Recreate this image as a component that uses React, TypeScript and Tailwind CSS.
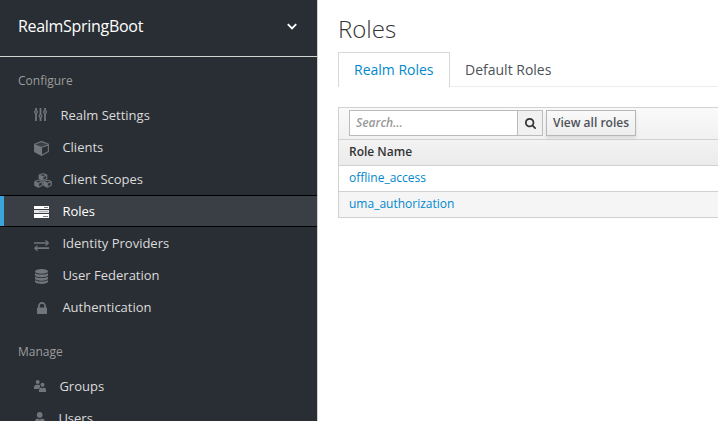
import type { ReactNode } from "react";

const CUBE =
  "M896 1629l640-349v-636l-640 233v752zm-64-865l698-254-698-254-698 254zm832-252v768q0 35-18 65t-49 47l-704 384q-28 16-61 16t-61-16l-704-384q-31-17-49-47t-18-65v-768q0-40 23-73t61-50l704-256q22-8 44-8t44 8l704 256q38 17 61 50t23 73z";

const CUBE_FACE = "M832 764l698-254-698-254-698 254z";

const sliders = (
  <svg className="mt-[9px] h-[13px] w-[13px]" viewBox="0 0 13 13" fill="none" stroke="currentColor">
    <path strokeWidth="1.8" d="M2 0v2.400M2 5.600V13M6.500 0v6.400M6.500 9.600V13M11 0v2.400M11 5.600V13" />
    <path strokeWidth="1.200" d="M.6 4a1.400 1.400 0 1 0 2.800 0a1.400 1.400 0 1 0-2.800 0M5.100 8a1.400 1.400 0 1 0 2.800 0a1.400 1.400 0 1 0-2.800 0M9.600 4a1.400 1.400 0 1 0 2.800 0a1.400 1.400 0 1 0-2.800 0" />
  </svg>
);

const cube = (
  <svg className="mt-[10px] h-[15px] w-[15px]" viewBox="0 120 1664 1680" fill="currentColor">
    <path d={CUBE} />
    <path opacity=".25" d={CUBE_FACE} />
  </svg>
);

const cubes = (
  <svg className="mt-[10px] h-[15px] w-[18px]" viewBox="0 0 18 15" fill="currentColor" stroke="currentColor">
    <path strokeWidth="110" transform="translate(4.9 -.2) scale(.0049 .0045)" d={CUBE} />
    <path strokeWidth="110" transform="translate(.4 6.400) scale(.0049 .0045)" d={CUBE} />
    <path strokeWidth="110" transform="translate(9.400 6.400) scale(.0049 .0045)" d={CUBE} />
  </svg>
);

const tasks = (
  <svg className="mt-[11px] h-[12px] w-[15px]" viewBox="0 0 15 12">
    <path fill="#fff" d="M0 0h15v3H0zM0 8h15v4H0z" />
    <path fill="#e2e2e3" d="M0 4h15v3H0z" />
    <path fill="#777a80" d="M10 1h4v1h-4zM9 10h5v1H9z" />
    <path fill="#b4b5b8" d="M5 5h9v1H5z" />
  </svg>
);

const exchange = (
  <svg className="mt-[13px] h-[11px] w-[15px]" viewBox="0 0 15 11" fill="none" stroke="currentColor">
    <path strokeWidth="1.700" d="M0 3h14M1 8.200h14" />
    <path strokeWidth="1.300" d="M11.500.4 14.200 3l-2.700 2.600M3.500 5.600.8 8.200l2.700 2.600" />
  </svg>
);

const database = (
  <svg className="mt-[10px] ml-px h-[15px] w-[13px]" viewBox="0 0 13 15" fill="currentColor">
    <ellipse cx="6.500" cy="2.400" rx="6.500" ry="2.400" />
    <path d="M0 4.100c2 2 11 2 13 0v1.800c0 3-13 3-13 0zM0 7.600c2 2 11 2 13 0v1.800c0 3-13 3-13 0zM0 11.100c2 2 11 2 13 0v1.500c0 3.200-13 3.200-13 0z" />
  </svg>
);

const lock = (
  <svg className="mt-[11px] ml-[3px] h-[12px] w-[10px]" viewBox="320 128 1152 1408" preserveAspectRatio="none" fill="currentColor">
    <path d="M640 768h512v-192q0-106-75-181t-181-75-181 75-75 181v192zm832 96v576q0 40-28 68t-68 28h-960q-40 0-68-28t-28-68v-576q0-40 28-68t68-28h32v-192q0-184 132-316t316-132 316 132 132 316v192h32q40 0 68 28t28 68z" />
  </svg>
);

const groups = (
  <svg className="mt-[10px] h-[12px] w-[12px]" viewBox="0 0 12 12" fill="currentColor">
    <circle cx="3.700" cy="2" r="2" />
    <circle cx="8.500" cy="4.800" r="2" />
    <path d="M0 9V7q0-2 2.200-2.300h2.800q.8.200 1 .9-.2 1 .2 1.600-1.400.5-1.700 1.800zM5 12v-2q0-2.200 2-2.600l1.500 1 1.500-1q2 .4 2 2.600v2z" />
  </svg>
);

const user = (
  <svg className="mt-[10px] ml-px h-[13px] w-[10px]" viewBox="0 0 10 13" fill="currentColor">
    <circle cx="4.700" cy="2.900" r="2.800" />
    <path d="M0 12V9.500q0-2.600 2.500-2.900l2.300 1 2.300-1q2.900.3 2.900 2.900V12z" />
  </svg>
);

function NavItem({ icon, label, pad, active = false }: { icon: ReactNode; label: string; pad: string; active?: boolean }) {
  if (active) {
    return (
      <li className="flex h-8 border-y border-black bg-[#393f45] text-white">
        <span className="w-1 bg-[#39a5dc]" />
        <span className="-mt-px w-[30px]" />
        <span className="-mt-px w-0">{icon}</span>
        <span className="-mt-px pl-[28.4px] leading-8">{label}</span>
      </li>
    );
  }
  return (
    <li className="flex h-8 pl-[34px] text-[#72767b]">
      <span className="w-0">{icon}</span>
      <span className={`${pad} leading-8 text-[#dbdbdb]`}>{label}</span>
    </li>
  );
}

function Sidebar() {
  return (
    <aside className="h-full w-[318px] shrink-0 overflow-hidden border-r border-[#d1d1d1] bg-[#292e34]">
      <div className="flex h-[57px] items-center justify-between border-b border-[#cfd6d1] pr-[20px] pb-[4px] pl-[18px] text-base text-white">
        <span className="tracking-[-0.3px]">RealmSpringBoot</span>
        <svg className="mt-px h-[7px] w-[10px]" viewBox="0 0 10 7" fill="none" stroke="white" strokeWidth="1.800">
          <path d="M.8 1.200 5 5.400 9.200 1.200" />
        </svg>
      </div>
      <h2 className="mt-[14px] h-7 pl-[18px] text-[12px] leading-5 text-[#9c9c9c]">Configure</h2>
      <ul className="text-[13px]">
        <NavItem icon={sliders} label="Realm Settings" pad="pl-[26.4px]" />
        <NavItem icon={cube} label="Clients" pad="pl-[28.4px]" />
        <NavItem icon={cubes} label="Client Scopes" pad="pl-[28.4px]" />
        <NavItem icon={tasks} label="Roles" pad="pl-[28.4px]" active />
        <NavItem icon={exchange} label="Identity Providers" pad="pl-[28.4px]" />
        <NavItem icon={database} label="User Federation" pad="pl-[28.4px]" />
        <NavItem icon={lock} label="Authentication" pad="pl-[28.4px]" />
      </ul>
      <h2 className="mt-[19px] h-7 pl-[18px] text-[12px] leading-5 text-[#9c9c9c]">Manage</h2>
      <ul className="text-[13px]">
        <NavItem icon={groups} label="Groups" pad="pl-[25.4px]" />
        <NavItem icon={user} label="Users" pad="pl-[24.4px]" />
      </ul>
    </aside>
  );
}

export default function App() {
  return (
    <div className="flex h-[421px] w-[718px] overflow-hidden bg-white font-['Open_Sans',sans-serif] text-[12px] text-[#333]">
      <Sidebar />
      <main className="min-w-0 flex-1 pl-[20px]">
        <h1 className="mt-[13px] h-[39px] text-[24px] leading-8 font-light">Roles</h1>
        <nav className="flex h-[35px] text-[14px] leading-[34px] text-[#4d5258]">
          <a className="w-[112px] border border-b-0 border-[#d8d8d8] pl-[15px] text-[#0088ce]">Realm Roles</a>
          <a className="flex-1 border-b border-[#ececec] pt-px pl-[15px]">Default Roles</a>
        </nav>
        <section className="mt-[20px] border-y border-l border-[#d1d1d1]">
          <div className="flex h-[31px] bg-linear-to-b from-[#fafafa] to-[#f1f1f1] pt-[2px] pl-[10px]">
            <div className="flex h-[26px] w-[194px] border border-[#bbb] bg-white">
              <input className="w-[167px] shrink-0 pl-[6px] text-[12px] italic outline-none placeholder:font-semibold placeholder:text-[#999]" placeholder="Search..." />
              <button className="flex flex-1 items-center justify-center border-l border-[#bbb] bg-[#f1f1f1]" aria-label="Search">
                <svg className="h-[11px] w-[11px]" viewBox="64 128 1664 1664" fill="#333">
                  <path d="M1216 832q0-185-131.500-316.500t-316.500-131.500-316.500 131.500-131.500 316.500 131.500 316.500 316.500 131.500 316.500-131.500 131.500-316.500zm512 832q0 52-38 90t-90 38q-54 0-90-38l-343-342q-179 124-399 124-143 0-273.500-55.500t-225-150-150-225-55.500-273.500 55.500-273.500 150-225 225-150 273.500-55.500 273.500 55.500 225 150 150 225 55.500 273.500q0 220-124 399l343 343q37 37 37 90z" />
                </svg>
              </button>
            </div>
            <button className="ml-[3px] h-[26px] w-[90px] border border-[#b7b7b7] bg-linear-to-b from-[#fafafa] to-[#ededed] text-[12px] leading-[24px] font-semibold text-[#4d5258] shadow-[0_2px_3px_rgba(3,3,3,0.1)]">
              View all roles
            </button>
          </div>
          <div className="h-[26px] border-t border-[#d1d1d1] bg-linear-to-b from-[#f3f3f3] to-[#ebebeb] pl-[10px] leading-[24px] font-semibold">Role Name</div>
          <div className="h-[26px] border-t border-[#d1d1d1] pl-[10px] leading-[24px] text-[#0088ce]">offline_access</div>
          <div className="h-[26px] border-t border-[#d1d1d1] bg-[#f5f5f5] pl-[10px] leading-[24px] text-[#0088ce]">uma_authorization</div>
        </section>
      </main>
    </div>
  );
}
